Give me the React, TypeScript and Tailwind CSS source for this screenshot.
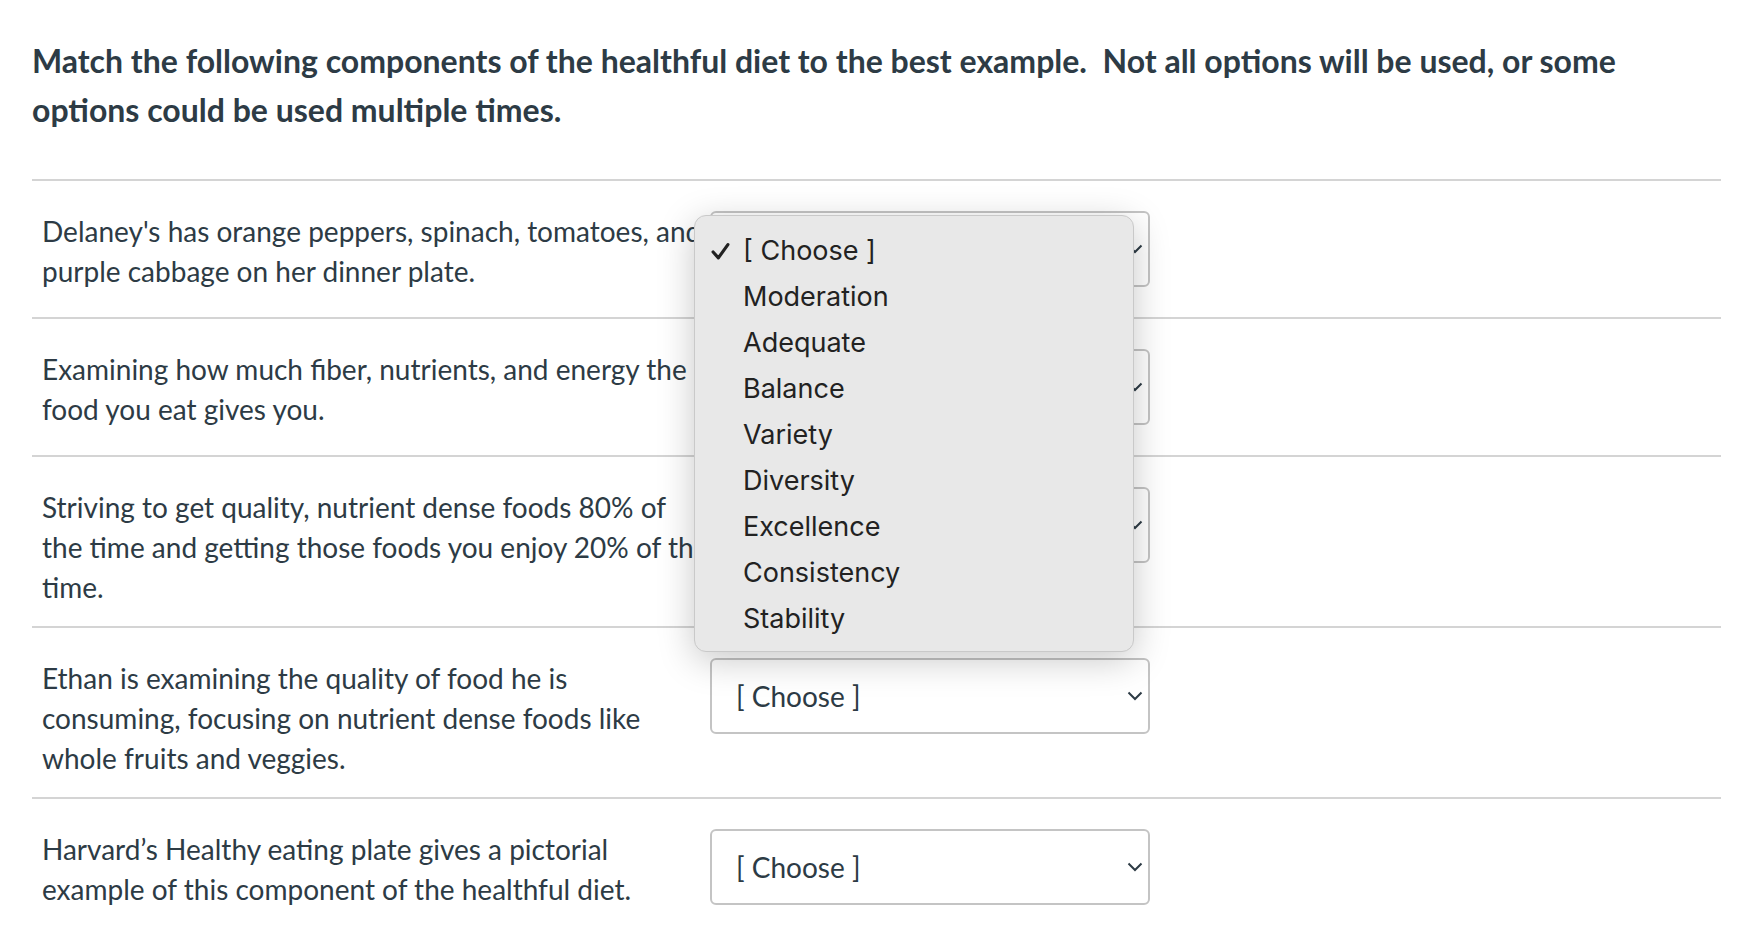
import React from 'react';

const rows: string[][] = [
  ["Delaney's has orange peppers, spinach, tomatoes, and", 'purple cabbage on her dinner plate.'],
  ['Examining how much fiber, nutrients, and energy the', 'food you eat gives you.'],
  ['Striving to get quality, nutrient dense foods 80% of', 'the time and getting those foods you enjoy 20% of the', 'time.'],
  ['Ethan is examining the quality of food he is', 'consuming, focusing on nutrient dense foods like', 'whole fruits and veggies.'],
  ['Harvard\u2019s Healthy eating plate gives a pictorial', 'example of this component of the healthful diet.'],
];

const options = ['[ Choose ]', 'Moderation', 'Adequate', 'Balance', 'Variety', 'Diversity', 'Excellence', 'Consistency', 'Stability'];

const Chevron = () => (
  <svg width="16" height="10" viewBox="0 0 16 10" className="shrink-0">
    <path d="M1.5 1.5 L8 8 L14.5 1.5" fill="none" stroke="#2d3b45" strokeWidth="2" />
  </svg>
);

const SelectBox = () => (
  <div className="w-[440px] h-[76px] border-2 border-[#c4c4c4] rounded-[6px] bg-white flex items-center justify-between pl-[24px] pr-[5px]">
    <span className="text-[28px] text-[#2d3b45]">[ Choose ]</span>
    <Chevron />
  </div>
);

const Menu = () => (
  <div
    className="absolute left-[-16px] top-[4px] w-[440px] bg-[#e8e8e8] border border-[#c9c9c9] rounded-[12px] pt-[12px] pb-[9px] shadow-[0_8px_36px_rgba(0,0,0,0.22)] z-10"
    style={{ fontFamily: 'Inter, "Noto Sans", sans-serif' }}
  >
    {options.map((o, i) => (
      <div key={o} className="h-[46px] flex items-center text-[27px] text-[#222222]">
        <span className="w-[48px] flex justify-end pr-[13px]">
          {i === 0 && (
            <svg width="19" height="19" viewBox="0 0 18 18">
              <path d="M2 9.5 L7 15 L16 2.5" fill="none" stroke="#222222" strokeWidth="3" strokeLinecap="round" strokeLinejoin="round" />
            </svg>
          )}
        </span>
        <span>{o}</span>
      </div>
    ))}
  </div>
);

export default function App() {
  return (
    <div className="bg-white min-h-screen pl-[32px] pr-[17px] pt-[36px] text-[#2d3b45]" style={{ fontFamily: 'Lato, "Open Sans", sans-serif' }}>
      <h1 className="text-[32px] leading-[49px] font-bold mb-[45px]">
        Match the following components of the healthful diet to the best example.&nbsp; Not all options will be used, or some
        <br />
        options could be used multiple times.
      </h1>

      {rows.map((lines, idx) => (
        <div key={idx} className="border-t-2 border-[#d4d4d4] pt-[30px] pb-[19px] flex">
          <div className="pl-[10px] w-[678px] text-[28px] leading-[40px]">
            {lines.map((l) => (
              <div key={l} className="whitespace-nowrap">{l}</div>
            ))}
          </div>
          <div className="relative mb-[11px] h-[76px]">
            <SelectBox />
            {idx === 0 && <Menu />}
          </div>
        </div>
      ))}
    </div>
  );
}
